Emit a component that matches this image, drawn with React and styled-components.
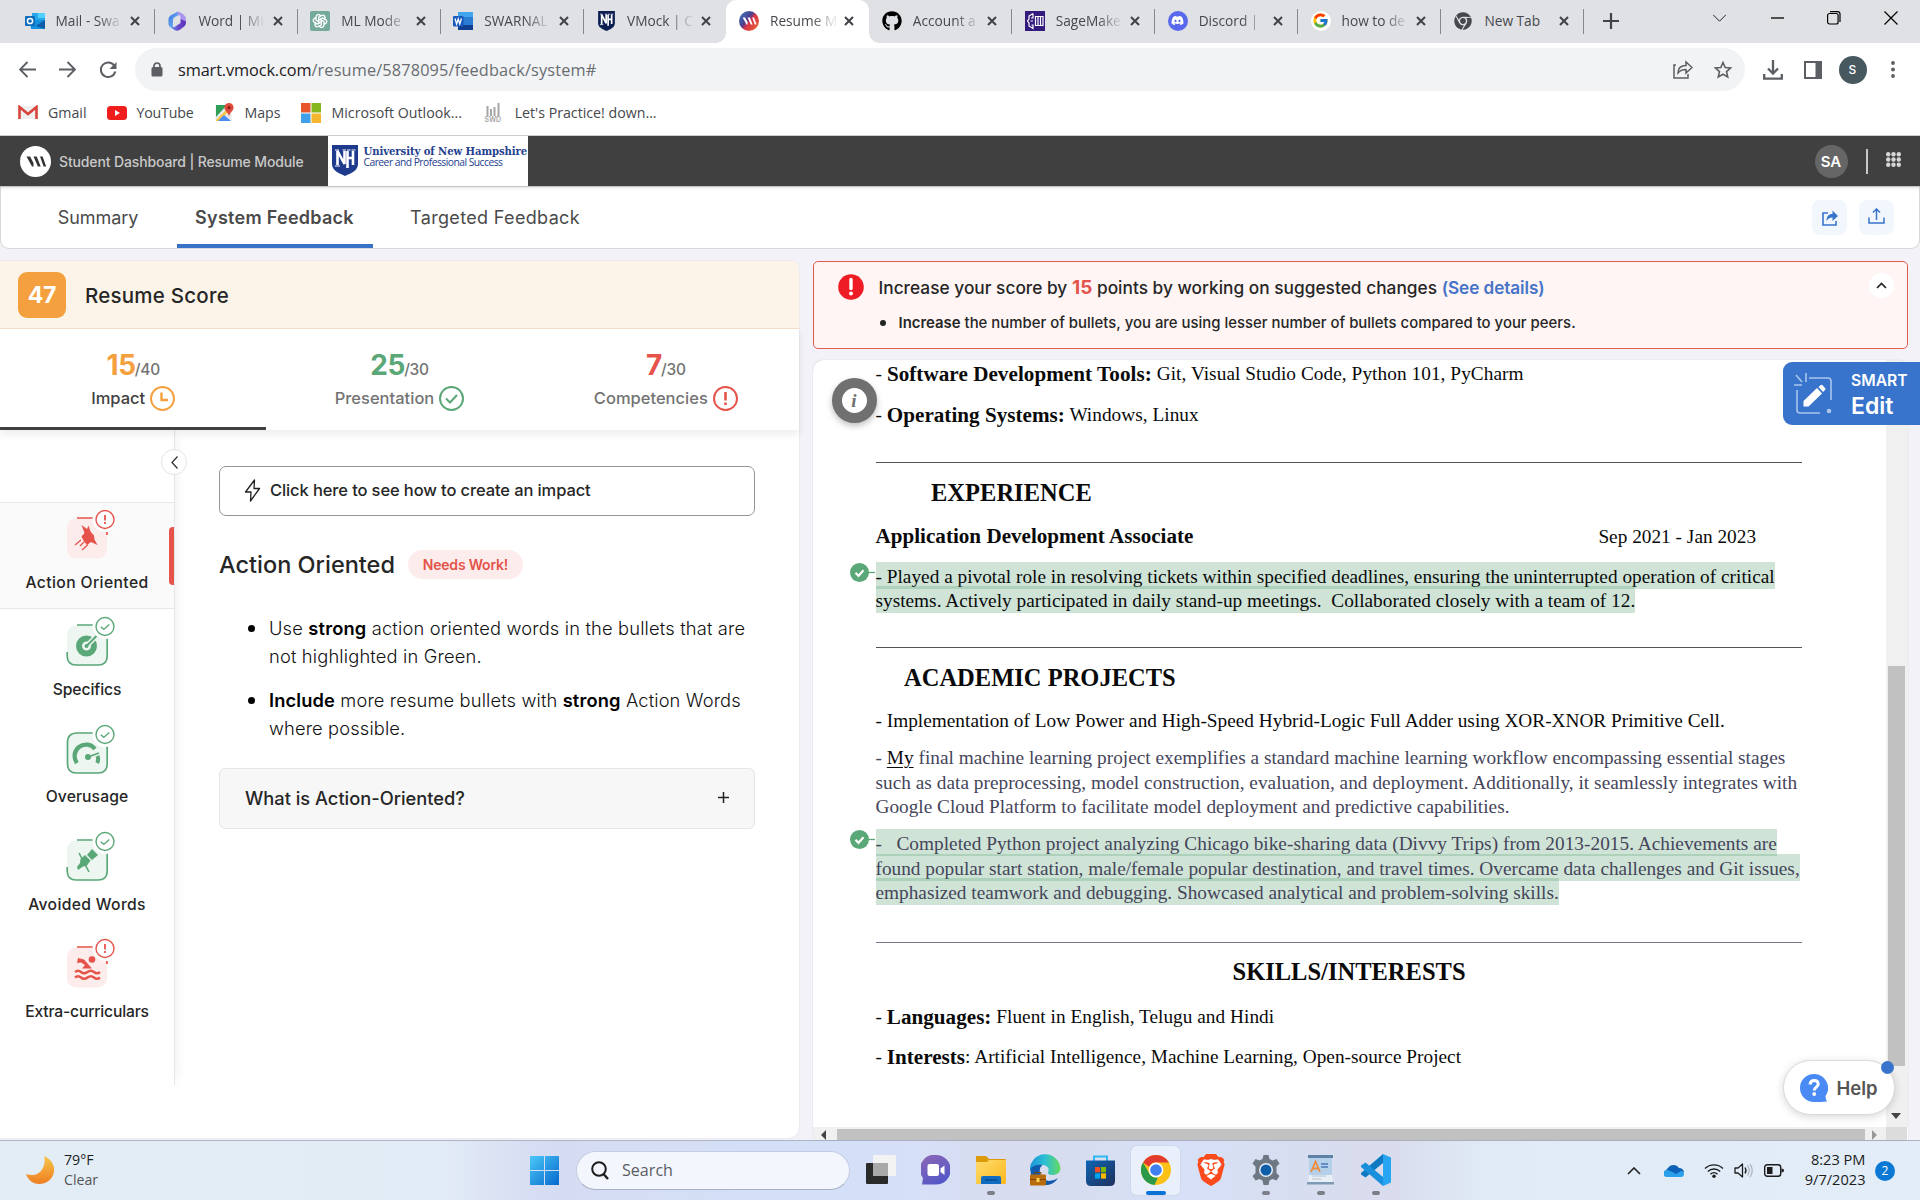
import React from "react";
import styled, { createGlobalStyle, css } from "styled-components";
import { FaGithub, FaDiscord, FaChrome } from "react-icons/fa";
import { FcGoogle } from "react-icons/fc";
import { TbBrandOpenai } from "react-icons/tb";
import { SiBrave } from "react-icons/si";

const ui = `"Open Sans", "Noto Sans", sans-serif`;
const app = `Inter, "Open Sans", sans-serif`;
const serif = `"Liberation Serif", "Times New Roman", serif`;

const GlobalStyle = createGlobalStyle`
  * { box-sizing: border-box; }
  body { margin: 0; background: #f3f2f8; font-family: ${app}; }
  svg { display: block; flex: none; }
`;

const Page = styled.div`
  width: 1920px;
  height: 1200px;
  display: flex;
  flex-direction: column;
  overflow: hidden;
`;

/* ---------- browser tab strip ---------- */
const TabStrip = styled.div`
  display: flex;
  flex: none;
  height: 43px;
  padding-left: 12px;
  background: #dfe1e5;
  font: 400 13.7px ${ui};
  color: #45484c;
`;
const Tab = styled.div`
  position: relative;
  display: flex;
  align-items: center;
  flex: none;
  width: 142.9px;
  padding: 0 15px 2px 12.5px;
  ${(p) => p.$divider && css`
    &::after { content: ""; position: absolute; right: 0; top: 9px; width: 1px; height: 25px; background: #85888c; }
  `}
  ${(p) => p.$active && css`
    background: #fff;
    border-radius: 10px 10px 0 0;
    z-index: 1;
    &::before, &::after { content: ""; position: absolute; bottom: 0; width: 10px; height: 10px; }
    &::before { left: -10px; background: radial-gradient(circle at 0 0, transparent 9.5px, #fff 10px); }
    &::after { right: -10px; background: radial-gradient(circle at 100% 0, transparent 9.5px, #fff 10px); }
  `}
`;
const Favicon = styled.span`
  display: flex;
  align-items: center;
  justify-content: center;
  width: 20px;
  height: 20px;
  margin-right: 11px;
`;
const TabTitle = styled.span`
  flex: 1;
  white-space: nowrap;
  line-height: 24px;
  ${(p) => p.$fade && css`
    mask-image: linear-gradient(90deg, #000 42px, rgba(0, 0, 0, 0.12) 64px);
  `}
`;
const NewTabButton = styled.div`
  display: flex;
  align-items: center;
  justify-content: center;
  width: 54px;
  padding-bottom: 1px;
`;
const WindowControls = styled.div`
  display: flex;
  height: 36px;
  margin-left: auto;
`;
const ControlSlot = styled.div`
  display: flex;
  align-items: center;
  justify-content: center;
  width: 57.2px;
`;

/* ---------- toolbar ---------- */
const Toolbar = styled.div`
  display: flex;
  flex: none;
  height: 49px;
  padding: 5px 7.5px 0;
  background: #fff;
`;
const ToolSlot = styled.div`
  display: flex;
  align-items: center;
  justify-content: center;
  width: 40px;
  height: 43px;
`;
const Omnibox = styled.div`
  display: flex;
  align-items: center;
  width: 1610px;
  height: 43px;
  margin: 0 7.5px;
  padding: 0 2.5px 0 16px;
  border-radius: 22px;
  background: #f1f3f5;
  font: 400 16.3px ${ui};
  color: #6a6d71;
`;
const Url = styled.span`
  flex: 1;
  margin-left: 15px;
  letter-spacing: 0.15px;
  b { font-weight: 400; color: #1f2022; letter-spacing: -0.1px; }
`;
const Profile = styled.div`
  display: flex;
  align-items: center;
  justify-content: center;
  width: 28px;
  height: 28px;
  border-radius: 50%;
  background: #47585f;
  color: #fff;
  font: 500 12px ${app};
`;
const Bookmarks = styled.div`
  display: flex;
  align-items: center;
  flex: none;
  height: 44px;
  padding: 0 0 2px 18px;
  background: #fff;
  border-bottom: 1px solid #d3d4d6;
  font: 400 14.2px ${ui};
  color: #45484c;
`;
const Bookmark = styled.div`
  display: flex;
  align-items: center;
  gap: ${(p) => p.$gap || 10}px;
  margin-right: ${(p) => p.$mr || 20}px;
  letter-spacing: ${(p) => p.$ls || 0}px;
`;

/* ---------- application header ---------- */
const AppHeader = styled.header`
  position: relative;
  z-index: 2;
  display: flex;
  align-items: center;
  flex: none;
  height: 51px;
  padding-left: 19.5px;
  background: #404040;
  border-bottom: 1px solid #c4c4c4;
  box-shadow: 0 1px 3px rgba(0, 0, 0, 0.12);
`;
const HeaderTitle = styled.div`
  width: 258px;
  margin-left: 8.5px;
  color: #c9c9c9;
  font: 500 14px ${app};
  letter-spacing: -0.13px;
`;
const School = styled.div`
  display: flex;
  align-items: flex-start;
  gap: 5.5px;
  width: 200px;
  height: 50px;
  margin-left: 11px;
  padding: 8.5px 0 0 4px;
  background: #fff;
  color: #24408e;
`;
const SchoolName = styled.div`
  white-space: nowrap;
  strong { display: block; font: 700 11.2px/12px "DejaVu Serif Condensed", "DejaVu Serif", serif; letter-spacing: -0.07px; }
  span { display: block; font: 400 10.3px/11px ${ui}; letter-spacing: -0.52px; }
`;
const HeaderRight = styled.div`
  display: flex;
  align-items: center;
  margin-left: auto;
  padding-right: 19.5px;
`;
const Initials = styled.div`
  display: flex;
  align-items: center;
  justify-content: center;
  width: 33px;
  height: 33px;
  border-radius: 50%;
  background: #666;
  color: #fff;
  font: 600 15px ${app};
`;
const HeaderRule = styled.div`
  width: 2px;
  height: 25px;
  margin: 0 18px;
  background: #c8c8c8;
`;
const AppsGrid = styled.span`
  padding-bottom: 4px;
`;

/* ---------- section nav ---------- */
const SectionNav = styled.nav`
  display: flex;
  flex: none;
  height: 62px;
  padding: 0 25px 0 39px;
  background: #fff;
  border: 1px solid #d8d8d8;
  border-top: 0;
  border-radius: 0 0 9px 9px;
`;
const NavItem = styled.div`
  display: flex;
  align-items: center;
  justify-content: center;
  width: ${(p) => p.$w}px;
  margin-right: ${(p) => p.$mr}px;
  padding-right: 1px;
  color: #4a4a4a;
  font: ${(p) => (p.$active ? 600 : 400)} 18px ${app};
  letter-spacing: ${(p) => p.$ls}px;
  white-space: nowrap;
  box-shadow: ${(p) => (p.$active ? "inset 0 -4px 0 #3872c6" : "none")};
  ${(p) => p.$active && css`border-radius: 3px 3px 0 0;`}
`;
const NavActions = styled.div`
  display: flex;
  align-items: center;
  gap: 12px;
  margin-left: auto;
`;
const ActionButton = styled.div`
  display: flex;
  align-items: center;
  justify-content: center;
  width: 35px;
  height: 35px;
  padding-bottom: ${(p) => p.$lift || 0}px;
  border-radius: 8px;
  background: #f2f7fe;
`;

/* ---------- body ---------- */
const Body = styled.main`
  display: flex;
  flex: 1;
  min-height: 0;
  padding-top: 12px;
  background: #f3f2f8;
`;
const ScorePanel = styled.section`
  display: flex;
  flex-direction: column;
  flex: none;
  width: 799px;
  margin: 0 14px 2px 0;
  background: #fff;
  border-radius: 0 8px 10px 0;
  box-shadow: 0 0 2px rgba(0, 0, 0, 0.12);
`;
const ScoreHeader = styled.div`
  display: flex;
  align-items: center;
  gap: 19px;
  height: 68px;
  padding-left: 18px;
  padding-top: 1px;
  background: #fcf4e8;
  border-bottom: 1px solid #f6dfc6;
  border-radius: 0 8px 0 0;
  color: #262626;
  font: 500 20.5px ${app};
  letter-spacing: 0.23px;
`;
const ScoreBox = styled.div`
  display: flex;
  align-items: center;
  justify-content: center;
  width: 48px;
  height: 46px;
  border-radius: 9px;
  background: #f4a03e;
  color: #fff;
  font: 700 23px ${app};
  letter-spacing: -0.2px;
`;
const ScoreTabs = styled.div`
  position: relative;
  z-index: 1;
  display: grid;
  grid-template-columns: repeat(3, 1fr);
  height: 101px;
  box-shadow: 0 4px 8px rgba(0, 0, 0, 0.08);
`;
const ScoreTab = styled.div`
  display: flex;
  flex-direction: column;
  align-items: center;
  padding-top: 17px;
  border-bottom: 3px solid ${(p) => (p.$active ? "#404040" : "transparent")};
`;
const ScoreValue = styled.div`
  height: 39px;
  color: #737373;
  font: 500 15.5px/38px ${app};
  letter-spacing: -0.3px;
  b { margin-right: -1px; color: ${(p) => p.$color}; font-size: 28px; font-weight: 700; }
`;
const ScoreLabel = styled.div`
  display: flex;
  align-items: center;
  gap: 5px;
  height: 26px;
  color: ${(p) => (p.$active ? "#404040" : "#737373")};
  font: 500 16.5px/26px ${app};
`;
const PanelBody = styled.div`
  display: flex;
  flex: 1;
`;
const SideMenu = styled.div`
  position: relative;
  flex: none;
  width: 175px;
  height: 655px;
  padding-top: 72px;
  border-right: 1px solid #e6e6e6;
  box-shadow: 8px 0 10px -6px rgba(0, 0, 0, 0.06);
`;
const CollapseButton = styled.div`
  position: absolute;
  right: -13px;
  top: 19px;
  z-index: 2;
  display: flex;
  align-items: center;
  justify-content: center;
  width: 26px;
  height: 26px;
  border: 1px solid #e4e4e4;
  border-radius: 50%;
  background: #fff;
`;
const MenuItem = styled.div`
  position: relative;
  display: flex;
  flex-direction: column;
  align-items: center;
  height: 107.3px;
  padding-top: 6px;
  border: solid transparent;
  border-width: 1px 0;
  color: #262626;
  font: 500 15.7px/24px ${app};
  letter-spacing: ${(p) => p.$ls}px;
  svg { margin: 0 0 11.7px 8px; }
  ${(p) => p.$active && css`
    background: #fafafa;
    border-color: #e8e8e8;
    &::after { content: ""; position: absolute; right: 0; top: 24px; width: 5px; height: 58px; border-radius: 4px 0 0 4px; background: #e5534b; }
  `}
`;
const Detail = styled.div`
  flex: 1;
  padding: 36px 44px 0;
`;
const HowTo = styled.div`
  display: flex;
  align-items: center;
  gap: 9px;
  height: 50px;
  padding: 0 0 2px 24px;
  border: 1px solid #969696;
  border-radius: 7px;
  color: #262626;
  font: 500 16.5px ${app};
  letter-spacing: -0.11px;
`;
const DetailHeading = styled.div`
  display: flex;
  align-items: center;
  gap: 13px;
  margin-top: 33px;
  height: 30px;
  color: #262626;
  font: 500 23.5px ${app};
`;
const Pill = styled.span`
  display: flex;
  align-items: center;
  justify-content: center;
  width: 115px;
  height: 29px;
  border-radius: 15px;
  background: #fcedec;
  color: #e5534b;
  font: 600 14px ${app};
  letter-spacing: -0.2px;
`;
const Tips = styled.ul`
  margin: 34.5px 0 0;
  padding: 0;
  list-style: none;
  color: #111;
  font: 300 18.3px/28.5px ${app};
`;
const Tip = styled.li`
  display: flex;
  align-items: flex-start;
  margin-bottom: 15.3px;
  padding-left: 28.5px;
  white-space: nowrap;
  letter-spacing: ${(p) => p.$ls || 0}px;
  b { font-weight: 600; color: #000; }
  &::before { content: ""; flex: none; width: 7px; height: 7px; margin: 11px 14.5px 0 0; border-radius: 50%; background: #000; }
`;
const Accordion = styled.div`
  display: flex;
  align-items: center;
  justify-content: space-between;
  height: 61px;
  margin-top: 25px;
  padding: 0 25px 1px 25px;
  border: 1px solid #e6e6e6;
  border-radius: 6px;
  background: #f7f7f7;
  color: #262626;
  font: 500 18.3px ${app};
  letter-spacing: -0.01px;
`;

/* ---------- document column ---------- */
const DocColumn = styled.section`
  display: flex;
  flex-direction: column;
  flex: none;
  width: 1094.5px;
`;
const Alert = styled.div`
  display: flex;
  align-items: flex-start;
  flex: none;
  height: 88px;
  padding: 12px 12.5px 0 23.5px;
  border: 1px solid #e25c55;
  border-radius: 5px;
  background: #fef5f4;
  color: #262626;
`;
const AlertText = styled.div`
  flex: 1;
  margin-left: 15px;
  white-space: nowrap;
`;
const AlertTitle = styled.div`
  height: 28px;
  font: 500 17.3px/28px ${app};
  letter-spacing: 0.015px;
  b { color: #e5534b; font-weight: 700; font-size: 19px; }
  a { color: #4673c8; font-weight: 600; font-size: 17.2px; letter-spacing: -0.08px; }
`;
const AlertBullet = styled.div`
  display: flex;
  align-items: center;
  height: 20px;
  margin-top: 11px;
  font: 500 14.9px ${app};
  letter-spacing: 0.01px;
  &::before { content: ""; width: 6px; height: 6px; margin: 0 12.5px 0 1.5px; border-radius: 50%; background: #222; }
  b { font-weight: 600; }
`;
const AlertToggle = styled.div`
  display: flex;
  align-items: center;
  justify-content: center;
  width: 25px;
  height: 25px;
  margin-top: -1px;
  border-radius: 50%;
  background: #fff;
`;
const DocFrame = styled.div`
  position: relative;
  display: grid;
  grid-template-columns: 1072.5px 22px;
  grid-template-rows: 767px 13px;
  margin-top: 11px;
  border-radius: 10px 10px 0 0;
  background: #fff;
  box-shadow: 0 0 1px rgba(0, 0, 0, 0.3);
`;
const Sheet = styled.div`
  padding-left: 62.5px;
  overflow: hidden;
  font: 400 19.3px/24px ${serif};
  color: #0a0a0a;
`;
const Line = styled.div`
  position: relative;
  display: flex;
  height: 24px;
  margin-top: ${(p) => p.$mt || 0}px;
  padding-left: ${(p) => p.$indent || 0}px;
  color: ${(p) => (p.$muted ? "#45455a" : "inherit")};
  letter-spacing: ${(p) => p.$ls ?? (p.$muted ? 0.015 : 0.01)}px;
  white-space: pre;
  b { font-size: 21.1px; }
  u { color: #0a0a0a; text-decoration-thickness: 1px; text-underline-offset: 3px; }
`;
const DocHeading = styled(Line)`
  font-size: 24.5px;
  font-weight: 700;
`;
const DocDate = styled.span`
  margin-left: 405px;
  padding-top: 1.5px;
`;
const Mark = styled.span`
  height: 27px;
  margin-top: -2.9px;
  padding-top: 2.9px;
  background: rgba(95, 167, 122, 0.3);
`;
const Rule = styled.div`
  width: 926px;
  height: 1px;
  margin-top: ${(p) => p.$mt}px;
  background: ${(p) => (p.$violet ? "#78728a" : "#555")};
`;
const CheckMarker = styled.span`
  position: absolute;
  left: -25.5px;
  top: -2px;
`;
const InfoButton = styled.div`
  position: absolute;
  left: 18.5px;
  top: 18px;
  display: flex;
  align-items: center;
  justify-content: center;
  width: 45px;
  height: 45px;
  border: 10px solid #707070;
  border-radius: 50%;
  background: #fff;
  box-shadow: 0 3px 6px rgba(0, 0, 0, 0.25);
  color: #707070;
  font: italic 700 19px ${serif};
`;
const VScroll = styled.div`
  display: flex;
  flex-direction: column;
  align-items: center;
  padding: 306px 3px 0 2px;
  background: #f0f0f0;
  border-radius: 0 10px 0 0;
`;
const VThumb = styled.div`
  width: 17px;
  height: 400px;
  margin-bottom: 47px;
  background: #c1c1c1;
`;
const HScroll = styled.div`
  display: flex;
  align-items: flex-end;
  background: #f0f0f0;
`;
const HThumb = styled.div`
  width: 1028px;
  height: 11px;
  margin: 0 6px 0 7.5px;
  background: #c1c1c1;
`;
const ScrollCorner = styled.div`
  margin-right: 1px;
  background: #dcdcdc;
`;
const SmartEdit = styled.div`
  position: absolute;
  left: 970px;
  top: 2px;
  display: flex;
  align-items: center;
  width: 137px;
  height: 63px;
  padding-left: 10px;
  border-radius: 9px 0 0 9px;
  background: #3874cb;
  color: #fff;
  white-space: nowrap;
`;
const SmartText = styled.div`
  margin: 3px 0 0 18px;
  font: 600 15.7px/24px ${app};
  strong { display: block; font-size: 23px; line-height: 27.5px; font-weight: 600; }
`;
const HelpButton = styled.div`
  position: absolute;
  left: 969.5px;
  top: 700px;
  display: flex;
  align-items: center;
  width: 112px;
  height: 55px;
  padding: 0 0 0 16px;
  border: 1px solid #dadada;
  border-radius: 28px;
  background: #fff;
  box-shadow: 0 2px 8px rgba(0, 0, 0, 0.16);
  color: #555;
  font: 600 18.5px ${app};
  svg { margin-right: 9px; }
  &::after { content: ""; position: absolute; right: 0; top: 0; width: 13px; height: 13px; border-radius: 50%; background: #3874cb; }
`;

/* ---------- taskbar ---------- */
const Taskbar = styled.footer`
  display: flex;
  align-items: center;
  flex: none;
  height: 60px;
  padding: 0 25px 0 26px;
  border-top: 1px solid #afb3c4;
  background: linear-gradient(90deg, #e2edf6 0, #e2ecf6 440px, #d6dcf2 540px, #d3e0f7 760px, #d5e0f8 900px, #d8dcee 1010px, #d6e0f6 1180px, #d9dcec 1390px, #e0ebf7 1490px, #e2edf8 1920px);
  font: 400 14.2px/20px ${ui};
  color: #1c1c1c;
`;
const Weather = styled.div`
  display: flex;
  align-items: center;
  gap: 10px;
  width: 504px;
  margin-top: -2px;
  span { display: block; color: #555; }
`;
const SearchBox = styled.div`
  display: flex;
  align-items: center;
  gap: 13px;
  width: 274px;
  height: 39px;
  margin: 0 3px 0 17px;
  padding: 0 0 1px 14px;
  border: 1px solid #c6cde2;
  border-bottom-color: #a9b0c4;
  border-radius: 20px;
  background: #f3f6fd;
  color: #5c5e63;
  font-size: 16.1px;
`;
const AppSlot = styled.div`
  position: relative;
  display: flex;
  align-items: center;
  justify-content: center;
  flex: none;
  width: 49px;
  height: 49px;
  margin: 0 3px;
  padding-bottom: 1px;
  border-radius: 5px;
  ${(p) => p.$active && css`background: #eaf0fb; box-shadow: 0 0 1px rgba(0, 0, 0, 0.25);`}
  ${(p) => (p.$open || p.$active) && css`
    &::after { content: ""; position: absolute; bottom: 0; width: ${p.$active ? 20 : 8}px; height: 4px; border-radius: 2px; background: ${p.$active ? "#0a74d6" : "#7c7f88"}; }
  `}
`;
const Tray = styled.div`
  display: flex;
  align-items: center;
  margin-left: auto;
`;
const TraySlot = styled.div`
  display: flex;
  align-items: center;
  justify-content: center;
  width: ${(p) => p.$w || 30}px;
  margin-right: ${(p) => p.$mr || 0}px;
`;
const Clock = styled.div`
  width: 76.5px;
  margin: -3px 9.5px 0 0;
  text-align: right;
  font-size: 14.6px;
`;
const Count = styled.div`
  display: flex;
  align-items: center;
  justify-content: center;
  width: 20px;
  height: 20px;
  border-radius: 50%;
  background: #0a78d4;
  color: #fff;
  font-size: 12px;
`;

/* ---------- icons ---------- */
const Svg = ({ w, h = w, vb, children, ...rest }) => (
  <svg width={w} height={h} viewBox={vb || `0 0 ${w} ${h}`} fill="none" {...rest}>{children}</svg>
);
const CloseIcon = () => (
  <Svg w={10}><path d="M1 1l8 8M9 1l-8 8" stroke="#3f4246" strokeWidth="2" /></Svg>
);
const OutlookIcon = () => (
  <Svg w={20}>
    <rect x="7" y="2" width="13" height="9" fill="#28a8ea" /><rect x="13" y="2" width="7" height="5" fill="#50d0ff" />
    <path d="M5 9h15v8a1 1 0 0 1-1 1H6z" fill="#1490df" /><path d="M20 9l-9 6 9 3z" fill="#0f5ba8" />
    <rect y="5" width="10" height="10" rx="1" fill="#0f6cbd" /><circle cx="5" cy="10" r="2.600" stroke="#fff" strokeWidth="1.500" />
  </Svg>
);
const M365Icon = () => (
  <Svg w={20}>
    <defs>
      <linearGradient id="m1" x1="0" y1="0" x2="1" y2="1"><stop stopColor="#2f6fe0" /><stop offset="1" stopColor="#8fc8f8" /></linearGradient>
      <linearGradient id="m2" x1="0" y1="0" x2="1" y2="0"><stop stopColor="#5aa8f0" /><stop offset="0.500" stopColor="#6a4ad0" /><stop offset="1" stopColor="#5a2fb5" /></linearGradient>
    </defs>
    <path d="M11 0.500L3.500 4.500Q1.500 6 1.500 8v5q0 2 2 3.200l2.500 1V9q0-2 2-3l4-2z" fill="url(#m1)" />
    <path d="M10 0.500q3 0 6.500 3 2.500 2 2.500 5v3l-5.500-3V6q0-1.500-3-3z" fill="#a893ee" />
    <path d="M19 10.500q0 4-2.500 5.500l-4 3q-2.500 1.500-5 0L3 16q4 1 6-1l4.500-3V8z" fill="url(#m2)" />
  </Svg>
);
const GptBox = styled.span`
  display: flex;
  padding: 2px;
  border-radius: 2px;
  background: #75a99c;
`;
const WordIcon = () => (
  <Svg w={20}>
    <rect x="5" y="1" width="15" height="18" rx="1" fill="#2b7cd3" /><rect x="5" y="1" width="15" height="5" fill="#41a5ee" /><rect x="5" y="14" width="15" height="5" fill="#103f91" />
    <rect y="5" width="10.500" height="10.500" rx="1" fill="#185abd" /><path d="M2 7.500l1.600 5.500 1.600-5 1.600 5 1.600-5.500" stroke="#fff" strokeWidth="1.300" />
  </Svg>
);
const Shield = ({ w, h, color }) => (
  <Svg w={w} h={h} vb="0 0 26 31">
    <path d="M0 0h26v19c0 6-6 9-13 12C6 28 0 25 0 19z" fill={color} />
    <path d="M5.500 20V6l7 13V6M15.500 23V6M21 20V6M15.500 13H21" stroke="#fff" strokeWidth="2.600" />
    <path d="M3 5h4M10.500 5h3.500M15 5h3.500M19.500 5h4M3 21h5" stroke="#fff" strokeWidth="1.200" />
  </Svg>
);
const VmStrokes = ({ color, scale = 1 }) => (
  <g transform={`translate(15.5 15.5) scale(${scale}) translate(-15.5 -15.5)`}>
    <path d="M6.500 10.500h3.600l3.400 6.500v3.500h-1.500zM13.500 10.500h3.200l4 10h-2.800zM20 10.500h2.600l3.600 10h-2.600z" fill={color} />
  </g>
);
const VmockLogo = () => (
  <Svg w={31}><circle cx="15.500" cy="15.500" r="15.500" fill="#fff" /><VmStrokes color="#333" /></Svg>
);
const VmockFavicon = () => (
  <Svg w={20} vb="0 0 31 31">
    <defs><linearGradient id="vm" x1="0" y1="0" x2="1" y2="0.800"><stop stopColor="#3b82c4" /><stop offset="0.450" stopColor="#4a3f8f" /><stop offset="0.600" stopColor="#d8344a" /><stop offset="1" stopColor="#e8642c" /></linearGradient></defs>
    <circle cx="15.500" cy="15.500" r="15.500" fill="url(#vm)" /><VmStrokes color="#fff" scale={1.1} />
  </Svg>
);
const SageIcon = () => (
  <Svg w={20}>
    <rect width="20" height="20" fill="#341a7c" />
    <path d="M8 2.500L4 5v3L2.500 10 4 12v3l4 2.500V14H6.500M8 2.500V7H6M8 10H5.500" stroke="#fff" strokeWidth="1.200" />
    <path d="M10.500 5.500h7.500v9h-7.500zM13 5.500v9M15.500 5.500v9" stroke="#fff" strokeWidth="1.200" />
  </Svg>
);
const Round = styled.span`
  display: flex;
  align-items: center;
  justify-content: center;
  width: 20px;
  height: 20px;
  border-radius: 50%;
  background: ${(p) => p.$bg};
  color: #fff;
`;
const GmailIcon = () => (
  <Svg w={20} h={15}>
    <path d="M2 1h16v13H2z" fill="#efefef" /><path d="M1.500 14V2l8.500 7 8.500-7v12" stroke="#d8453a" strokeWidth="2.600" />
  </Svg>
);
const YouTubeIcon = () => (
  <Svg w={20} h={14}><rect width="20" height="14" rx="3.500" fill="#f01d1d" /><path d="M8 4l5 3-5 3z" fill="#fff" /></Svg>
);
const MapsIcon = () => (
  <Svg w={19} h={20}>
    <rect x="0.500" y="2" width="16" height="16" rx="1" fill="#e8eaec" />
    <path d="M1 2h11L1 14z" fill="#2f9e58" /><path d="M1 17L13 5l2 2L4 18H1z" fill="#f6c542" /><path d="M3 18l6-6 7 6z" fill="#4b8bf4" />
    <path d="M14 0a4.600 4.600 0 0 1 4.600 4.600C18.600 8 15 9 14 13.500 13 9 9.400 8 9.400 4.600A4.600 4.600 0 0 1 14 0z" fill="#dd4b3e" /><circle cx="14" cy="4.700" r="1.600" fill="#8c2018" />
  </Svg>
);
const MsIcon = () => (
  <Svg w={20}><path d="M0 0h9.500v9.500H0z" fill="#e8562c" /><path d="M10.500 0H20v9.500h-9.500z" fill="#86b81e" /><path d="M0 10.500h9.500V20H0z" fill="#42a0ea" /><path d="M10.500 10.500H20V20h-9.500z" fill="#f5b52e" /></Svg>
);
const SwdMark = styled.span`
  display: flex;
  flex-direction: column;
  align-items: center;
  color: #a5a5a5;
  font: 600 7px/7px ${app};
`;
const ClockBadge = () => (
  <Svg w={25}><circle cx="12.500" cy="12.500" r="11.500" stroke="#f4a03e" strokeWidth="2" /><path d="M11.500 6.500v7.500H18" stroke="#f4a03e" strokeWidth="2.400" /></Svg>
);
const CheckBadge = () => (
  <Svg w={25}><circle cx="12.500" cy="12.500" r="11.500" stroke="#5aa777" strokeWidth="2" /><path d="M7 12.500l4 4L18 9" stroke="#5aa777" strokeWidth="2" /></Svg>
);
const AlertBadge = () => (
  <Svg w={25}><circle cx="12.500" cy="12.500" r="11.500" stroke="#e5534b" strokeWidth="2" /><path d="M12.500 6v8.500M12.500 16.500v2.500" stroke="#e5534b" strokeWidth="2.600" /></Svg>
);
const RED = "#e5534b";
const GREEN = "#5aa777";
const MenuIcon = ({ tone, frame, children }) => {
  const c = tone === "red" ? RED : GREEN;
  return (
    <Svg w={50}>
      <rect x="1" y="9.500" width="40" height="40" rx="9" fill={tone === "red" ? "#fcedec" : "#edf6f1"} />
      <path d={frame} stroke={c} strokeWidth="1.700" />
      {children}
      <circle cx="39" cy="10.500" r="12.500" fill={tone === "red" ? "#fdfdfd" : "#fff"} />
      <circle cx="39" cy="10.500" r="9" fill="#fff" stroke={c} strokeWidth="1.400" />
      {tone === "red"
        ? <path d="M39 6v5.500M39 13v2" stroke={c} strokeWidth="1.800" />
        : <path d="M34.800 10.800l3 2.600 5.400-5" stroke={c} strokeWidth="1.400" />}
    </Svg>
  );
};
const redFrame = "M11 9h16M41 23v3";
const openFrame = "M11 9h16M41.200 22v18q0 9-9 9h-22q-9 0-9-9v-4";
const closedFrame = "M27 9H11q-9.500 0-9.500 9.500V40q0 9 9 9h21.500q9.200 0 9.200-9V22";
const ChromeIcon = ({ s }) => (
  <Svg w={s} vb="0 0 30 30">
    <circle cx="15" cy="15" r="15" fill="#fbc116" />
    <path d="M15 0A15 15 0 0 1 28 7.500H15a7.500 7.500 0 0 0-6.700 4.200L2 7.500A15 15 0 0 1 15 0z" fill="#e33b2e" />
    <path d="M2 7.500l6.500 11.300A7.500 7.500 0 0 0 17 22.200L13.500 30A15 15 0 0 1 2 7.500z" fill="#2a9a48" />
    <circle cx="15" cy="15" r="7.400" fill="#fff" /><circle cx="15" cy="15" r="5.800" fill="#3f80ee" />
  </Svg>
);
const GoodBullet = () => (
  <CheckMarker>
    <Svg w={26} h={20}><circle cx="9.500" cy="9.500" r="9.500" fill={GREEN} /><path d="M19 9.500h6" stroke={GREEN} strokeWidth="1.300" /><path d="M5.500 9.800l3 3 5-5.500" stroke="#fff" strokeWidth="2.200" /></Svg>
  </CheckMarker>
);

/* ---------- data ---------- */
const tabs = [
  { t: "Mail - Swa", i: <OutlookIcon />, d: 1, f: 1 },
  { t: "Word | Mi", i: <M365Icon />, d: 1, f: 1 },
  { t: "ML Mode", i: <GptBox><TbBrandOpenai size={16} color="#fff" /></GptBox>, d: 1, f: 1 },
  { t: "SWARNAL", i: <WordIcon />, d: 1, f: 1 },
  { t: "VMock | C", i: <Shield w={17} h={20} color="#0d1f52" />, f: 1 },
  { t: "Resume M", i: <VmockFavicon />, active: 1, f: 1 },
  { t: "Account a", i: <FaGithub size={20} color="#000" />, d: 1, f: 1 },
  { t: "SageMake", i: <SageIcon />, d: 1, f: 1 },
  { t: "Discord |", i: <Round $bg="#5a68ee"><FaDiscord size={13} /></Round>, d: 1, f: 1 },
  { t: "how to de", i: <Round $bg="#fff"><FcGoogle size={17} /></Round>, d: 1, f: 1 },
  { t: "New Tab", i: <FaChrome size={18} color="#45484c" />, d: 1 },
];

export default function App() {
  return (
    <Page>
      <GlobalStyle />
      <TabStrip>
        {tabs.map((x) => (
          <Tab key={x.t} $divider={x.d} $active={x.active}>
            <Favicon>{x.i}</Favicon>
            <TabTitle $fade={x.f}>{x.t}</TabTitle>
            <CloseIcon />
          </Tab>
        ))}
        <NewTabButton><Svg w={16}><path d="M8 0v16M0 8h16" stroke="#3f4246" strokeWidth="2.200" /></Svg></NewTabButton>
        <WindowControls>
          <ControlSlot><Svg w={13} h={8}><path d="M0 .7l6.500 6.500L13 .7" stroke="#222" /></Svg></ControlSlot>
          <ControlSlot><Svg w={13} h={2}><path d="M0 1h13" stroke="#000" strokeWidth="1.300" /></Svg></ControlSlot>
          <ControlSlot><Svg w={14}><rect x=".6" y="2.500" width="10.500" height="10.500" rx="2" stroke="#000" strokeWidth="1.200" /><path d="M3 .6h7.500q2.500 0 2.500 2.500V11" stroke="#000" strokeWidth="1.200" /></Svg></ControlSlot>
          <ControlSlot><Svg w={14}><path d="M.5.500l13 13M13.500.5l-13 13" stroke="#000" strokeWidth="1.200" /></Svg></ControlSlot>
        </WindowControls>
      </TabStrip>

      <Toolbar>
        <ToolSlot><Svg w={17}><path d="M17 8.500H1.500M8.500 1L1 8.500 8.500 16" stroke="#5b5e62" strokeWidth="1.900" /></Svg></ToolSlot>
        <ToolSlot><Svg w={17}><path d="M0 8.500h15.500M8.500 1L16 8.500 8.500 16" stroke="#5b5e62" strokeWidth="1.900" /></Svg></ToolSlot>
        <ToolSlot><Svg w={18}><path d="M15.500 5A7.300 7.300 0 1 0 16.300 10.500" stroke="#5b5e62" strokeWidth="2" /><path d="M17.500 1v7h-7z" fill="#5b5e62" /></Svg></ToolSlot>
        <Omnibox>
          <Svg w={12} h={15}><rect x=".5" y="5" width="11" height="9.500" rx="1.500" fill="#5b5e62" /><path d="M3 6V4a3 3 0 0 1 6 0v2" stroke="#5b5e62" strokeWidth="1.700" /></Svg>
          <Url><b>smart.vmock.com</b>/resume/5878095/feedback/system#</Url>
          <ToolSlot><Svg w={20} h={19}><path d="M3 5H1v13h14v-4M5 13c0-5 3-7.500 8-7.500V2l6 5.500-6 5.500V9.500C9 9.500 7 10.500 5 13z" stroke="#5b5e62" strokeWidth="1.500" /></Svg></ToolSlot>
          <ToolSlot><Svg w={18}><path d="M9 1.500l2.200 5 5.300.5-4 3.600 1.200 5.300L9 13.200l-4.700 2.700 1.200-5.300-4-3.600 5.300-.5z" stroke="#5b5e62" strokeWidth="1.600" /></Svg></ToolSlot>
        </Omnibox>
        <ToolSlot><Svg w={20}><path d="M10 0v13M5 8.500l5 5 5-5M1.200 14v4.600h17.600V14" stroke="#5b5e62" strokeWidth="2.300" /></Svg></ToolSlot>
        <ToolSlot><Svg w={18}><rect x="1" y="1" width="16" height="16" stroke="#5b5e62" strokeWidth="2" /><path d="M11.500 1H17v16h-5.500z" fill="#5b5e62" /></Svg></ToolSlot>
        <ToolSlot><Profile>S</Profile></ToolSlot>
        <ToolSlot><Svg w={4} h={17}><g fill="#5b5e62"><circle cx="2" cy="2" r="1.900" /><circle cx="2" cy="8.500" r="1.900" /><circle cx="2" cy="15" r="1.900" /></g></Svg></ToolSlot>
      </Toolbar>

      <Bookmarks>
        <Bookmark><GmailIcon />Gmail</Bookmark>
        <Bookmark $ls={-0.2} $mr={22}><YouTubeIcon />YouTube</Bookmark>
        <Bookmark $mr={20.5}><MapsIcon />Maps</Bookmark>
        <Bookmark $gap={10.5} $mr={22.5}><MsIcon />Microsoft Outlook...</Bookmark>
        <Bookmark $gap={13.5}>
          <SwdMark><Svg w={14} h={13}><path d="M1.500 3v10M5 6v7M8.500 4v9M12.500 0v13" stroke="#a5a5a5" strokeWidth="2" /></Svg>SWD</SwdMark>
          Let's Practice! down...
        </Bookmark>
      </Bookmarks>

      <AppHeader>
        <VmockLogo />
        <HeaderTitle>Student Dashboard | Resume Module</HeaderTitle>
        <School>
          <Shield w={26} h={31} color="#1d3a8c" />
          <SchoolName><strong>University of New Hampshire</strong><span>Career and Professional Success</span></SchoolName>
        </School>
        <HeaderRight>
          <Initials>SA</Initials>
          <HeaderRule />
          <AppsGrid><Svg w={15}><g fill="#d6d6d6">{[2.2, 7.5, 12.8].map((y) => [2.2, 7.5, 12.8].map((x) => <circle key={`${x}${y}`} cx={x} cy={y} r="2.200" />))}</g></Svg></AppsGrid>
        </HeaderRight>
      </AppHeader>

      <SectionNav>
        <NavItem $w={117} $mr={20} $ls={-0.08}>Summary</NavItem>
        <NavItem $w={196} $mr={20} $ls={0.27} $active>System Feedback</NavItem>
        <NavItem $w={205} $mr={0} $ls={0.34}>Targeted Feedback</NavItem>
        <NavActions>
          <ActionButton><Svg w={16}><path d="M6 3H1v12h13v-4" stroke="#3874cb" strokeWidth="1.600" /><path d="M4.500 11c0-4.500 2-7 6-7V.5L16 6l-5.500 5V7.500C8 7.500 6 8.500 4.500 11z" fill="#3874cb" /></Svg></ActionButton>
          <ActionButton $lift={4}><Svg w={17} h={16}><path d="M8.500 12V1.500M5 4.500l3.500-3.500L12 4.500M1 9.500V15h15V9.500" stroke="#3874cb" strokeWidth="1.500" /></Svg></ActionButton>
        </NavActions>
      </SectionNav>

      <Body>
        <ScorePanel>
          <ScoreHeader><ScoreBox>47</ScoreBox>Resume Score</ScoreHeader>
          <ScoreTabs>
            <ScoreTab $active><ScoreValue $color="#f4a03e"><b>15</b>/40</ScoreValue><ScoreLabel $active>Impact <ClockBadge /></ScoreLabel></ScoreTab>
            <ScoreTab><ScoreValue $color={GREEN}><b>25</b>/30</ScoreValue><ScoreLabel>Presentation <CheckBadge /></ScoreLabel></ScoreTab>
            <ScoreTab><ScoreValue $color={RED}><b>7</b>/30</ScoreValue><ScoreLabel>Competencies <AlertBadge /></ScoreLabel></ScoreTab>
          </ScoreTabs>
          <PanelBody>
            <SideMenu>
              <CollapseButton><Svg w={7} h={13}><path d="M6.500.5l-5.500 6 5.500 6" stroke="#333" strokeWidth="1.300" /></Svg></CollapseButton>
              <MenuItem $active $ls={0.38}>
                <MenuIcon tone="red" frame={redFrame}>
                  <path d="M15.500 16l5.500 4 1.500-3.500 2 6 3.500 4 .5 4 3 5.500-6.500-3-4 3-3-3.500-2.500-5 3-3.500z" fill={RED} />
                  <path d="M9 36l6-5M14 37l4-4M16 41l6-5.500" stroke={RED} strokeWidth="1.200" />
                </MenuIcon>
                Action Oriented
              </MenuItem>
              <MenuItem $ls={-0.1}>
                <MenuIcon tone="green" frame={openFrame}>
                  <circle cx="20.500" cy="30" r="7.500" stroke={GREEN} strokeWidth="6" fill="#edf6f1" />
                  <path d="M20.500 30l9-9" stroke="#edf6f1" strokeWidth="5" /><path d="M20.500 30l10-10" stroke={GREEN} strokeWidth="2" /><circle cx="20.500" cy="30" r="2" fill={GREEN} />
                </MenuIcon>
                Specifics
              </MenuItem>
              <MenuItem $ls={0.08}>
                <MenuIcon tone="green" frame={closedFrame}>
                  <path d="M11 39a11 11 0 0 1 18-14" stroke={GREEN} strokeWidth="4.200" /><path d="M31.500 32q1.500 4-.5 7" stroke={GREEN} strokeWidth="4" />
                  <circle cx="22" cy="33" r="3" fill={GREEN} /><path d="M22 33l11-4" stroke={GREEN} strokeWidth="1.800" />
                </MenuIcon>
                Overusage
              </MenuItem>
              <MenuItem $ls={0.33}>
                <MenuIcon tone="green" frame={openFrame}>
                  <path d="M26 18l6 6-6 5-5-5z" fill={GREEN} /><path d="M19 24l5.500 5.500-3.500 5-4 1-5 3.500-1-3 3-4 .5-4z" fill={GREEN} />
                  <path d="M13 22l10 19" stroke={GREEN} strokeWidth="1.600" />
                </MenuIcon>
                Avoided Words
              </MenuItem>
              <MenuItem $ls={-0.19}>
                <MenuIcon tone="red" frame={redFrame}>
                  <circle cx="26" cy="21.500" r="3.300" fill={RED} />
                  <path d="M12 20l6 1.500 8 9h-10l3-3.500-4-2.500-4 .5z" fill={RED} />
                  <path d="M9 34q3-2.500 6 0t6.500 0 6.500 0 6 0M9 39.500q3-2.500 6 0t6.500 0 6.500 0 6 0" stroke={RED} strokeWidth="2.400" />
                </MenuIcon>
                Extra-curriculars
              </MenuItem>
            </SideMenu>
            <Detail>
              <HowTo>
                <Svg w={17} h={23}><path d="M10.500 1L1.500 13h5.500l-.5 9L15.500 9.500H10z" stroke="#222" strokeWidth="1.300" strokeLinejoin="round" /></Svg>
                Click here to see how to create an impact
              </HowTo>
              <DetailHeading>Action Oriented<Pill>Needs Work!</Pill></DetailHeading>
              <Tips>
                <Tip $ls={0.17}><span>Use <b>strong</b> action oriented words in the bullets that are<br />not highlighted in Green.</span></Tip>
                <Tip $ls={0.14}><span><b>Include</b> more resume bullets with <b>strong</b> Action Words<br />where possible.</span></Tip>
              </Tips>
              <Accordion>What is Action-Oriented?<Svg w={11}><path d="M5.500 0v11M0 5.500h11" stroke="#222" strokeWidth="1.500" /></Svg></Accordion>
            </Detail>
          </PanelBody>
        </ScorePanel>

        <DocColumn>
          <Alert>
            <Svg w={26}><circle cx="13" cy="13" r="12.800" fill="#ee1c25" /><path d="M13 5.500v9" stroke="#fff" strokeWidth="3.400" strokeLinecap="round" /><circle cx="13" cy="19.500" r="2" fill="#fff" /></Svg>
            <AlertText>
              <AlertTitle>Increase your score by <b>15</b> points by working on suggested changes <a>(See details)</a></AlertTitle>
              <AlertBullet><span><b>Increase</b> the number of bullets, you are using lesser number of bullets compared to your peers.</span></AlertBullet>
            </AlertText>
            <AlertToggle><Svg w={11} h={7}><path d="M1 6l4.500-4.500L10 6" stroke="#222" strokeWidth="1.700" /></Svg></AlertToggle>
          </Alert>

          <DocFrame>
            <Sheet>
              <Line $mt={1.8} $ls={0.06}>- <b>Software Development Tools:</b> Git, Visual Studio Code, Python 101, PyCharm</Line>
              <Line $mt={17} $ls={0.03}>- <b>Operating Systems:</b> Windows, Linux</Line>
              <Rule $mt={35.2} />
              <DocHeading $mt={17.8} $indent={55.5}>EXPERIENCE</DocHeading>
              <Line $mt={19.2}><b>Application Development Associate</b><DocDate>Sep 2021 - Jan 2023</DocDate></Line>
              <Line $mt={17}>
                <GoodBullet />
                <Mark>- Played a pivotal role in resolving tickets within specified deadlines, ensuring the uninterrupted operation of critical</Mark>
              </Line>
              <Line $mt={0.3}><Mark>systems. Actively participated in daily stand-up meetings.  Collaborated closely with a team of 12.</Mark></Line>
              <Rule $mt={33.7} />
              <DocHeading $mt={18.2} $indent={28.5}>ACADEMIC PROJECTS</DocHeading>
              <Line $mt={18.6}>- Implementation of Low Power and High-Speed Hybrid-Logic Full Adder using XOR-XNOR Primitive Cell.</Line>
              <Line $mt={13} $muted>- <u>My</u> final machine learning project exemplifies a standard machine learning workflow encompassing essential stages</Line>
              <Line $mt={1} $muted $ls={0.025}>such as data preprocessing, model construction, evaluation, and deployment. Additionally, it seamlessly integrates with</Line>
              <Line $mt={0} $muted $ls={0}>Google Cloud Platform to facilitate model deployment and predictive capabilities.</Line>
              <Line $mt={13.4} $muted $ls={0.025}>
                <GoodBullet />
                <Mark>-   Completed Python project analyzing Chicago bike-sharing data (Divvy Trips) from 2013-2015. Achievements are</Mark>
              </Line>
              <Line $mt={0.8} $muted $ls={0.005}><Mark>found popular start station, male/female popular destination, and travel times. Overcame data challenges and Git issues,</Mark></Line>
              <Line $mt={0} $muted $ls={0}><Mark>emphasized teamwork and debugging. Showcased analytical and problem-solving skills.</Mark></Line>
              <Rule $mt={37} $violet />
              <DocHeading $mt={16.8} $indent={357}>SKILLS/INTERESTS</DocHeading>
              <Line $mt={21.2} $ls={0.03}>- <b>Languages:</b> Fluent in English, Telugu and Hindi</Line>
              <Line $mt={16} $ls={0.02}>- <b>Interests</b>: Artificial Intelligence, Machine Learning, Open-source Project</Line>
            </Sheet>
            <VScroll><VThumb /><Svg w={10} h={6}><path d="M0 0h10L5 6z" fill="#444" /></Svg></VScroll>
            <HScroll>
              <Svg w={16} h={10}><path d="M13 0v10L8 5z" fill="#444" /></Svg>
              <HThumb />
              <Svg w={8} h={10}><path d="M1 0v10l5-5z" fill="#999" /></Svg>
            </HScroll>
            <ScrollCorner />
            <InfoButton>i</InfoButton>
            <SmartEdit>
              <Svg w={40} h={41}>
                <g stroke="#a9c5ee" strokeWidth="1.600"><path d="M16 5h19q3 0 3 3v19M4 17v20q0 3 3 3h20M1 12h8M3 2l6 7M13 0v9" /></g>
                <circle cx="36" cy="38" r="2.300" fill="#a9c5ee" />
                <path d="M10.500 33.500v-5.500L24 15l5 5.500L15.500 33.500zM25.500 14l2-1.800q1-1 2 0l2.500 2.800q1 1 0 2l-2 2z" fill="#fff" />
              </Svg>
              <SmartText>SMART<strong>Edit</strong></SmartText>
            </SmartEdit>
            <HelpButton>
              <Svg w={28}><path d="M14 0a14 14 0 0 1 11.500 22q0 3 1.500 5.500-7 .5-13 .5a14 14 0 0 1 0-28z" fill="#4a8af4" /><path d="M10 10.500q.5-4 4.200-4 4 0 4 3.700c0 3-4 3-4 6.300" stroke="#fff" strokeWidth="3" /><circle cx="14.200" cy="20" r="1.900" fill="#fff" /></Svg>
              Help
            </HelpButton>
          </DocFrame>
        </DocColumn>
      </Body>

      <Taskbar>
        <Weather>
          <Svg w={28}>
            <defs><linearGradient id="moon" x1="0" y1="0" x2="0" y2="1"><stop stopColor="#f7c64a" /><stop offset="1" stopColor="#ee7e22" /></linearGradient></defs>
            <path d="M18 0c7 3 11 9 10 16-1.500 8-8 12-15 12C7 28 2 24 0 18c5 2 11 1.500 15-3 3.500-4.500 4.500-10 3-15z" fill="url(#moon)" />
          </Svg>
          <div>79°F<span>Clear</span></div>
        </Weather>
        <Svg w={29}>
          <defs><linearGradient id="win" x1="0" y1="0" x2="1" y2="1"><stop stopColor="#4cc8f8" /><stop offset="1" stopColor="#0568cc" /></linearGradient></defs>
          <path d="M0 0h14v14H0zM15 0h14v14H15zM0 15h14v14H0zM15 15h14v14H15z" fill="url(#win)" />
        </Svg>
        <SearchBox>
          <Svg w={18} h={19}><circle cx="8" cy="8" r="6.800" stroke="#1c1c1c" strokeWidth="2" /><path d="M12.500 13l4.500 5" stroke="#1c1c1c" strokeWidth="2.400" /></Svg>
          Search
        </SearchBox>
        <AppSlot>
          <Svg w={30}><rect y="8" width="22" height="21" rx="1" fill="#2a2a2a" /><rect x="7" width="23" height="21" rx="1" fill="#f3f3f3" /><rect x="7" y="8" width="15" height="13" fill="#a9a9a9" /></Svg>
        </AppSlot>
        <AppSlot>
          <Svg w={29} h={30}>
            <defs><linearGradient id="chat" x1="0" y1="0" x2="0.600" y2="1"><stop stopColor="#9068b4" /><stop offset="1" stopColor="#5357c8" /></linearGradient></defs>
            <path d="M15 0a14.300 14.300 0 0 1 0 29.500H1L2 23A14.300 14.300 0 0 1 15 0z" fill="url(#chat)" />
            <rect x="6.500" y="9" width="11.500" height="12" rx="2" fill="#fff" /><path d="M19.500 13.500l4-3v9.500l-4-3z" fill="#fff" />
          </Svg>
        </AppSlot>
        <AppSlot $open>
          <Svg w={30} h={28}>
            <defs><linearGradient id="fold" x1="0" y1="0" x2="1" y2="1"><stop stopColor="#ffdb6e" /><stop offset="1" stopColor="#fbb81c" /></linearGradient></defs>
            <path d="M0 1q0-1 1-1h9l3 3h16q1 0 1 1v5H0z" fill="#dc9a08" /><path d="M0 6h11l2-2h17v23q0 1-1 1H1q-1 0-1-1z" fill="url(#fold)" />
            <path d="M5 28v-6q0-2 2-2h16q2 0 2 2v6z" fill="#0f6cc0" /><path d="M9 24h12" stroke="#0a4a8c" strokeWidth="1.400" />
          </Svg>
        </AppSlot>
        <AppSlot>
          <Svg w={31} h={32}>
            <defs><linearGradient id="edge" x1="0" y1="0" x2="1" y2="0"><stop stopColor="#1a94d8" /><stop offset="0.500" stopColor="#2cc0d4" /><stop offset="1" stopColor="#66d860" /></linearGradient></defs>
            <path d="M0 17A15 15 0 0 1 30.500 14c0 5-4 7-8 7-5 0-5-2-4-4 1-3-2-6-6-6-6 0-10 4-12.500 6z" fill="url(#edge)" />
            <path d="M1 14c3-3 8-4 11.500-3C7 15 10 26 19 27q5 0 9-3c-3 5-8 7.500-13 7C5 30-1 23 1 14z" fill="#1059ac" />
            <rect y="20.500" width="16" height="11" rx="1" fill="#b86c0e" /><path d="M5 20.500v-2h6v2M0 25.500h16" stroke="#7a4204" /><rect x="6.500" y="24" width="3" height="4" fill="#ffd24a" />
          </Svg>
        </AppSlot>
        <AppSlot>
          <Svg w={29} h={31}>
            <defs><linearGradient id="store" x1="0" y1="0" x2="1" y2="1"><stop stopColor="#0d66b4" /><stop offset="1" stopColor="#1f2f5c" /></linearGradient></defs>
            <path d="M8 6V1.500h13V6" stroke="#32b8f0" strokeWidth="2" /><path d="M0 5.500h29V26q0 5-5 5H5q-5 0-5-5z" fill="url(#store)" />
            <path d="M9 12h5v5.300H9z" fill="#f25022" /><path d="M15 12h5v5.300h-5z" fill="#7fba00" /><path d="M9 18.300h5v5.300H9z" fill="#00a4ef" /><path d="M15 18.300h5v5.300h-5z" fill="#ffb900" />
          </Svg>
        </AppSlot>
        <AppSlot $active><ChromeIcon s={30} /></AppSlot>
        <AppSlot><Svg w={32}><path d="M8 6h16l2 8-3 11-7 5-7-5-3-11z" fill="#fff" /><SiBrave size={32} color="#fb4a1c" /></Svg></AppSlot>
        <AppSlot $open>
          <Svg w={30}>
            <path d="M12.500 0h5l1 4 3 1.500 4-1.500 3 4.500-3 3v6.500l3 3-3 4.500-4-1.500-3 1.500-1 4.500h-5l-1-4.500-3-1.500-4 1.500-3-4.500 3-3v-6.500l-3-3L4.500 4l4 1.500 3-1.500z" fill="#6e7883" />
            <circle cx="15" cy="15" r="7" fill="#e9eef5" /><circle cx="15" cy="15" r="5.500" fill="#0f5fa8" />
          </Svg>
        </AppSlot>
        <AppSlot $open>
          <Svg w={27} h={30}>
            <path d="M2 1h23v22H2z" fill="#b5d0ea" /><path d="M1 0h25v3H1z" fill="#5d82a6" /><path d="M2 20h23l1 7H1z" fill="#e8eff6" /><path d="M0 27h27v2.500H0z" fill="#7e9ab5" />
            <path d="M4 17L8.500 6.500 13 17M5.800 13.500h5.400" stroke="#ee8c3c" strokeWidth="1.800" /><path d="M14 9h7M14 12h7" stroke="#4a7ab8" strokeWidth="1.400" /><path d="M5 21h14M5 24h9" stroke="#b8c4d0" />
          </Svg>
        </AppSlot>
        <AppSlot $open>
          <Svg w={30} h={32}>
            <path d="M22 0l8 3.500v25L22 32z" fill="#27a5f2" /><path d="M22 0v9L4.500 23.500 0 20.500v-1.500z" fill="#0c79c2" /><path d="M22 32v-9L4.500 8.500 0 11.500V13z" fill="#1a8fdc" />
          </Svg>
        </AppSlot>
        <Tray>
          <TraySlot $w={40}><Svg w={14} h={8}><path d="M1 7l6-6 6 6" stroke="#222" strokeWidth="1.600" /></Svg></TraySlot>
          <TraySlot $w={40} $mr={5}><Svg w={20} h={13}><path d="M4 11A4 4 0 0 1 4 4 6.500 6.500 0 0 1 15 4q4 0 5 4l-8 4z" fill="#0d62b8" /><path d="M3 13a3.500 3.500 0 0 1 0-7q2 0 9 4l5-3a3 3 0 0 1 0 6z" fill="#2a9fea" /></Svg></TraySlot>
          <TraySlot><Svg w={20} h={15}><path d="M1 5.500a13 13 0 0 1 18 0M3.800 8.500a9 9 0 0 1 12.400 0M6.500 11.200a5 5 0 0 1 7 0" stroke="#1c1c1c" strokeWidth="1.400" /><circle cx="10" cy="13.200" r="1.700" fill="#1c1c1c" /></Svg></TraySlot>
          <TraySlot><Svg w={20} h={15}><path d="M1 5h3l4.500-4v13L4 10H1z" stroke="#1c1c1c" strokeWidth="1.300" strokeLinejoin="round" /><path d="M11 4.500q2 3 0 6" stroke="#1c1c1c" strokeWidth="1.300" /><path d="M13.500 2.500q3.500 5 0 10M16 1q4.500 6.500 0 13" stroke="#aab0b8" strokeWidth="1.200" /></Svg></TraySlot>
          <TraySlot><Svg w={20} h={13}><rect x=".7" y=".7" width="16" height="11.600" rx="2.500" stroke="#1c1c1c" strokeWidth="1.400" /><rect x="3" y="3" width="5.500" height="7" fill="#1c1c1c" /><path d="M17.500 4.500q2.500 0 2.500 2t-2.500 2z" fill="#1c1c1c" /></Svg></TraySlot>
          <Clock>8:23 PM<br />9/7/2023</Clock>
          <Count>2</Count>
        </Tray>
      </Taskbar>
    </Page>
  );
}
